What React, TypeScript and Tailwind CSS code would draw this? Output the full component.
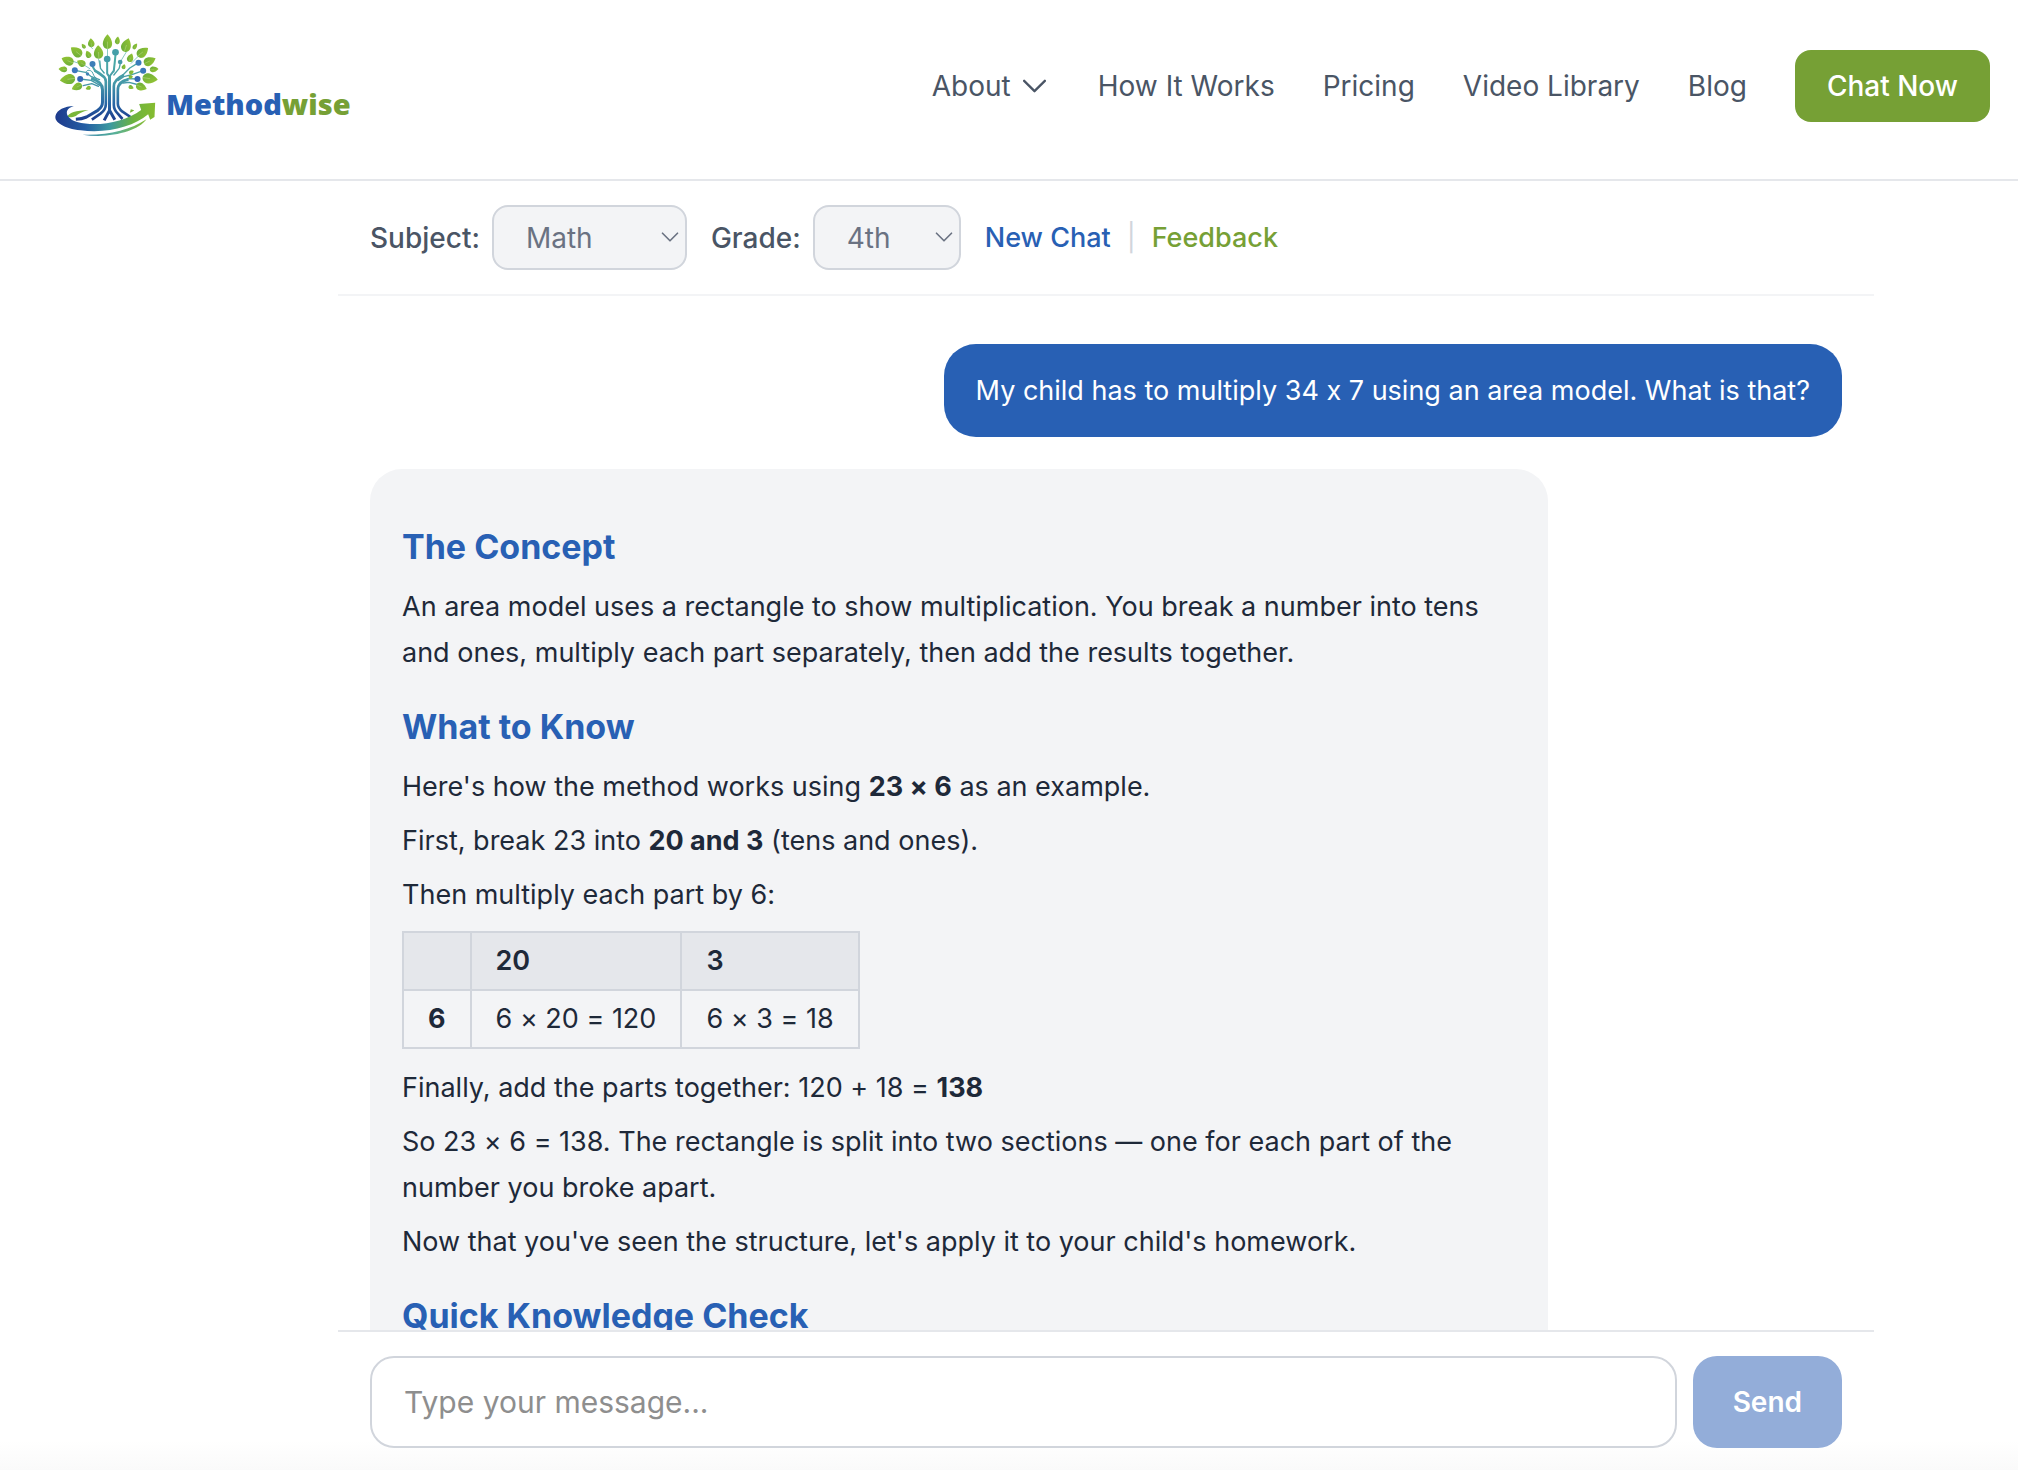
import React, { useState } from 'react';

interface Leaf {
  x: number;
  y: number;
  w: number;
  h: number;
  angle: number;
}

const leaves: Leaf[] = [
  { x: 233, y: 66, w: 28, h: 44, angle: 0 },
  { x: 184, y: 69, w: 20, h: 27, angle: -5 },
  { x: 161, y: 79, w: 11, h: 17, angle: -35 },
  { x: 263, y: 62, w: 15, h: 23, angle: 8 },
  { x: 290, y: 76, w: 29, h: 42, angle: 18 },
  { x: 316, y: 80, w: 12, h: 20, angle: 35 },
  { x: 206, y: 97, w: 28, h: 40, angle: -3 },
  { x: 139, y: 96, w: 28, h: 40, angle: -52 },
  { x: 175, y: 104, w: 17, h: 23, angle: -25 },
  { x: 339, y: 97, w: 28, h: 40, angle: 52 },
  { x: 302, y: 114, w: 19, h: 27, angle: 20 },
  { x: 113, y: 123, w: 26, h: 38, angle: -68 },
  { x: 154, y: 130, w: 20, h: 28, angle: -60 },
  { x: 360, y: 124, w: 26, h: 38, angle: 65 },
  { x: 99, y: 149, w: 17, h: 26, angle: -85 },
  { x: 373, y: 149, w: 17, h: 26, angle: 85 },
  { x: 113, y: 179, w: 30, h: 46, angle: -98 },
  { x: 361, y: 177, w: 30, h: 46, angle: 98 },
  { x: 141, y: 202, w: 22, h: 33, angle: -115 },
  { x: 335, y: 202, w: 23, h: 34, angle: 112 },
  { x: 175, y: 205, w: 12, h: 16, angle: -110 },
  { x: 304, y: 203, w: 12, h: 16, angle: 110 },
  { x: 282, y: 141, w: 12, h: 15, angle: 20 },
  { x: 305, y: 158, w: 12, h: 15, angle: 60 },
  { x: 303, y: 172, w: 11, h: 13, angle: 80 },
];

const nodes = [
  { x: 257, y: 98, r: 10, fill: '#459fa8' },
  { x: 232, y: 118, r: 10, fill: '#439ca8' },
  { x: 188, y: 133, r: 9, fill: '#3d7fb8' },
  { x: 271, y: 127, r: 7, fill: '#4599a8' },
  { x: 326, y: 129, r: 9, fill: '#397cba' },
  { x: 135, y: 152, r: 9, fill: '#3b78bd' },
  { x: 340, y: 153, r: 9, fill: '#3877bb' },
  { x: 151, y: 178, r: 9, fill: '#3467b4' },
  { x: 323, y: 178, r: 9, fill: '#3467b4' },
  { x: 173, y: 163, r: 5, fill: '#3f83b5' },
];

const LogoMark = () => (
  <svg viewBox="70 40 320 315" className="h-[105px] w-[107px] shrink-0" aria-hidden="true">
    <defs>
      <linearGradient id="leaf" x1="0" y1="1" x2="1" y2="0">
        <stop offset="0" stopColor="#68ab3a" />
        <stop offset="1" stopColor="#9bc833" />
      </linearGradient>
      <linearGradient id="trunk" gradientUnits="userSpaceOnUse" x1="0" y1="100" x2="0" y2="302">
        <stop offset="0" stopColor="#4db0a5" />
        <stop offset="0.45" stopColor="#4598a8" />
        <stop offset="0.75" stopColor="#2867a5" />
        <stop offset="1" stopColor="#1d3c8c" />
      </linearGradient>
      <linearGradient id="swoosh" gradientUnits="userSpaceOnUse" x1="76" y1="0" x2="376" y2="0">
        <stop offset="0" stopColor="#1e3a8c" />
        <stop offset="0.3" stopColor="#235da3" />
        <stop offset="0.55" stopColor="#3c9aa0" />
        <stop offset="0.78" stopColor="#6cb33f" />
        <stop offset="1" stopColor="#86bc30" />
      </linearGradient>
      <linearGradient id="swooshThin" gradientUnits="userSpaceOnUse" x1="158" y1="0" x2="350" y2="0">
        <stop offset="0" stopColor="#2f80a8" />
        <stop offset="0.5" stopColor="#58b09a" />
        <stop offset="1" stopColor="#86bc30" />
      </linearGradient>
    </defs>

    {/* Branches */}
    <g fill="none" stroke="url(#trunk)" strokeWidth="4" strokeLinecap="round" strokeLinejoin="round">
      <path d="M233 86V112M206 118l5 24M290 96l-17 28M257 106l-5 52M184 83l4 4M326 109l-22 22M130 125l28 10M158 133l22 14" strokeWidth="2" />
      <path d="M232 126v36l8 12" strokeWidth="6" />
      <path d="M257 106l-5 47-12 16" strokeWidth="6" />
      <path d="M188 140l8 14 25 18" strokeWidth="6" />
      <path d="M210 124l2 22 11 14M271 133l-3 13-16 20" />
      <path d="M135 152l32 6 16 12 26 10" />
      <path d="M169 157c2-8 14-6 18 0s4 14 12 18" strokeWidth="3" />
      <path d="M151 178l33 4 26 15" />
      <path d="M160 198l26-6 20 8" />
      <path d="M326 129l-26 16-20 20-16 12" />
      <path d="M340 153l-34 12-24 6-18 12" />
      <path d="M323 178l-30-1-25 20" />
      <path d="M328 196l-30-8-18 2" />
    </g>

    {/* Trunk and roots */}
    <g fill="none" stroke="url(#trunk)" strokeLinejoin="round">
      <path d="M184 176q34 10 34 34v38q0 14-14 24l-34 20q-14 6-32 7" strokeWidth="9" />
      <path d="M194 152q36 18 34 34v68q0 16-16 28l-26 18" strokeWidth="8" />
      <path d="M239 168v104l-16 30M239 272l16 28" strokeWidth="9" />
      <path d="M282 166q-30 14-30 34v56q0 14 12 26l14 16" strokeWidth="8" />
      <path d="M296 180q-32 4-32 32v40q0 12 14 24l24 16" strokeWidth="8" />
    </g>

    {nodes.map((n) => (
      <circle key={`${n.x}-${n.y}`} cx={n.x} cy={n.y} r={n.r} fill={n.fill} />
    ))}

    {leaves.map((l) => (
      <g key={`${l.x}-${l.y}`} transform={`translate(${l.x} ${l.y}) rotate(${l.angle}) scale(${l.w / 20} ${l.h / 20})`}>
        <path d="M0-10C8-5 12 2 9 6C7 9 3 10 0 10C-3 10-7 9-9 6C-12 2-8-5 0-10Z" fill="url(#leaf)" />
        <path d="M0 0V10" stroke="#d6eaa8" strokeWidth="0.6" />
      </g>
    ))}

    {/* Swoosh */}
    <path d="M112 292c4-12 26-20 64-20c-18 4-30 10-38 17c-8 4-18 5-26 3Z" fill="#79b63a" />
    <path d="M300 279q12-4 13-7l-10-3Z" fill="#79b63a" />
    <path
      d="M132 259C100 268 106 296 142 307C200 323 284 308 334 271L328 253L376 249L374 292L361 300L355 284C310 322 232 342 152 332C104 326 72 308 77 288C81 271 104 260 132 259Z"
      fill="url(#swoosh)"
    />
    <path d="M158 345C232 348 300 332 350 299C324 335 240 358 158 345Z" fill="url(#swooshThin)" />
  </svg>
);

const ChevronDown = ({ className }: { className: string }) => (
  <svg viewBox="0 0 20 12" fill="none" stroke="currentColor" strokeLinecap="round" strokeLinejoin="round" className={className} aria-hidden="true">
    <path d="M1 1.5l9 9 9-9" />
  </svg>
);

interface SelectProps {
  id: string;
  label: string;
  value: string;
  options: string[];
  widthClass: string;
  onChange: (value: string) => void;
}

const SelectField: React.FC<SelectProps> = ({ id, label, value, options, widthClass, onChange }) => (
  <div className="flex items-center gap-3">
    <label htmlFor={id} className="font-medium text-gray-600">
      {label}
    </label>
    <div className="relative">
      <select
        id={id}
        value={value}
        onChange={(e) => onChange(e.target.value)}
        className={`${widthClass} block h-[65px] appearance-none rounded-2xl border-2 border-gray-300 bg-gray-100 pl-8 text-gray-500`}
      >
        {options.map((o) => (
          <option key={o}>{o}</option>
        ))}
      </select>
      <ChevronDown className="pointer-events-none absolute top-[27px] right-2 h-[10px] w-[18px] stroke-2 text-gray-500" />
    </div>
  </div>
);

const navLinks = ['How It Works', 'Pricing', 'Video Library', 'Blog'];

const Header = () => (
  <header className="flex h-[181px] shrink-0 items-start justify-between border-b-2 border-gray-200 pr-7 pl-[53px]">
    <a href="#" className="flex items-end pt-[33px]">
      <LogoMark />
      <span className="mb-3.5 ml-1.5 font-['Open_Sans'] text-[29px] leading-[40px] font-extrabold text-[#2860b4]">
        Method<span className="text-[#76a035]">wise</span>
      </span>
    </a>
    <nav className="flex items-center gap-12 pt-[50px] text-[28px] text-gray-600">
      <button type="button" className="flex items-center gap-3 pr-1">
        About
        <ChevronDown className="h-[14px] w-[23px] stroke-2" />
      </button>
      {navLinks.map((link) => (
        <a key={link} href="#">
          {link}
        </a>
      ))}
      <a href="#" className="flex h-[72px] items-center rounded-2xl bg-[#76a035] px-8 font-medium text-white">
        Chat Now
      </a>
    </nav>
  </header>
);

const Heading = ({ children }: { children: React.ReactNode }) => (
  <h3 className="mt-5 mb-1.5 text-[34px] leading-[46px] font-bold text-[#2860b4] first:mt-0">{children}</h3>
);

const Answer = () => (
  <div className="flex max-w-4/5 flex-col gap-2 rounded-[32px] bg-gray-100 px-8 pt-[55px] pb-8 text-gray-800">
    <Heading>The Concept</Heading>
    <p>
      An area model uses a rectangle to show multiplication. You break a number into tens and ones, multiply each part
      separately, then add the results together.
    </p>

    <Heading>What to Know</Heading>
    <p>
      Here's how the method works using <strong>23 × 6</strong> as an example.
    </p>
    <p>
      First, break 23 into <strong>20 and 3</strong> (tens and ones).
    </p>
    <p>Then multiply each part by 6:</p>
    <table className="mt-[5px] mb-2 border-collapse self-start text-left">
      <thead>
        <tr className="bg-gray-200">
          <th className="border-2 border-gray-300 px-6 py-[5px]"></th>
          <th className="border-2 border-gray-300 px-6 py-[5px] font-semibold">20</th>
          <th className="border-2 border-gray-300 px-6 py-[5px] font-semibold">3</th>
        </tr>
      </thead>
      <tbody>
        <tr>
          <th className="border-2 border-gray-300 px-6 py-[5px]">6</th>
          <td className="border-2 border-gray-300 px-6 py-[5px]">6 × 20 = 120</td>
          <td className="border-2 border-gray-300 px-6 py-[5px]">6 × 3 = 18</td>
        </tr>
      </tbody>
    </table>
    <p>
      Finally, add the parts together: 120 + 18 = <strong>138</strong>
    </p>
    <p>
      So 23 × 6 = 138. The rectangle is split into two sections — one for each part of the number you broke apart.
    </p>
    <p>Now that you've seen the structure, let's apply it to your child's homework.</p>

    <Heading>Quick Knowledge Check</Heading>
  </div>
);

const App: React.FC = () => {
  const [subject, setSubject] = useState('Math');
  const [grade, setGrade] = useState('4th');
  const [message, setMessage] = useState('');

  return (
    <div className="flex h-screen flex-col bg-white bg-linear-to-b from-white from-98% to-neutral-50 font-[Inter,sans-serif] text-[27px] leading-[46px] [font-feature-settings:'calt'_0]">
      <Header />

      <main className="mr-36 ml-auto flex min-h-0 w-full max-w-[1536px] flex-1 flex-col">
        {/* Toolbar */}
        <div className="flex shrink-0 items-center gap-6 border-b-2 border-gray-100 px-8 py-6 text-[28px]">
          <SelectField id="subject" label="Subject:" value={subject} options={['Math', 'Reading']} widthClass="w-[195px]" onChange={setSubject} />
          <SelectField id="grade" label="Grade:" value={grade} options={['3rd', '4th', '5th']} widthClass="w-[148px]" onChange={setGrade} />
          <div className="flex items-center gap-4 text-[27px] font-medium">
            <button type="button" className="text-[#2860b4]">
              New Chat
            </button>
            <span className="font-normal text-gray-300">|</span>
            <button type="button" className="text-[#76a035]">
              Feedback
            </button>
          </div>
        </div>

        {/* Messages */}
        <div className="flex min-h-0 flex-1 flex-col items-start gap-8 overflow-y-auto px-8 py-12 [scrollbar-width:none]">
          <p className="shrink-0 self-end rounded-[32px] bg-[#2860b4] px-8 py-6 leading-[45px] text-white">
            My child has to multiply 34 x 7 using an area model. What is that?
          </p>
          <Answer />
        </div>

        {/* Composer */}
        <form className="flex shrink-0 gap-4 border-t-2 border-gray-200 px-8 pt-6 pb-[22px]" onSubmit={(e) => e.preventDefault()}>
          <input
            type="text"
            aria-label="Message"
            placeholder="Type your message..."
            value={message}
            onChange={(e) => setMessage(e.target.value)}
            className="h-[92px] min-w-0 flex-1 rounded-3xl border-2 border-gray-300 bg-white px-8 text-[30px] placeholder:text-[#8e8e8e]"
          />
          <button type="submit" disabled={!message} className="rounded-3xl bg-[#2860b4] px-10 text-[28px] font-semibold text-white disabled:bg-[#93add9]">
            Send
          </button>
        </form>
      </main>
    </div>
  );
};

export default App;
